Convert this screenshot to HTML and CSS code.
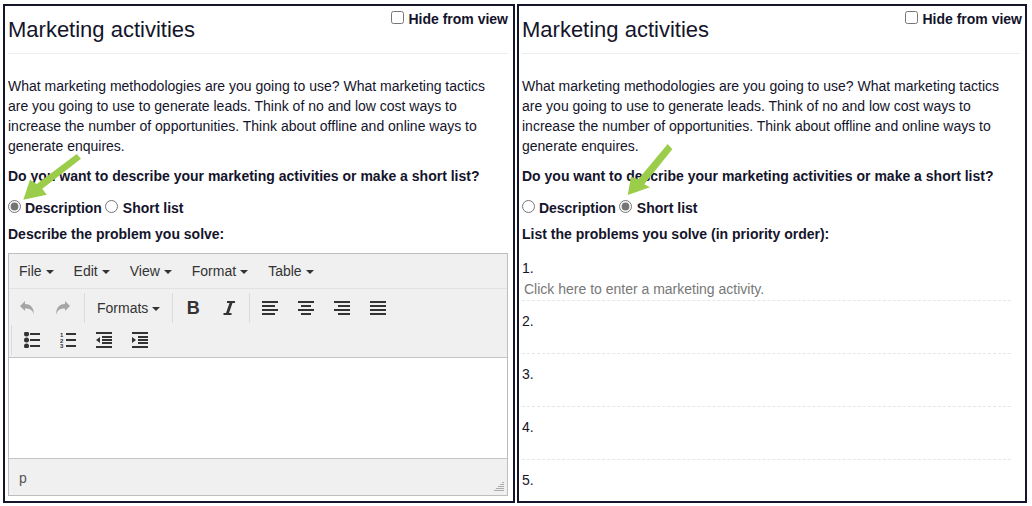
FILE: index.html
```html
<!DOCTYPE html>
<html lang="en">

<head>
    <meta charset="UTF-8">
    <title>Marketing activities</title>
    <link rel="stylesheet" href="styles.css">
</head>

<body>
    <div class="container">
        <div class="panel panel-left">
            <label class="hide-view"><input type="checkbox"> Hide from view</label>
            <h3 class="title">Marketing activities</h3>
            <p class="intro">What marketing methodologies are you going to use? What marketing tactics are you going to use to generate leads. Think of no and low cost ways to increase the number of opportunities. Think about offline and online ways to generate enquires.</p>
            <p class="question">Do you want to describe your marketing activities or make a short list?</p>
            <div class="choice">
                <label><input type="radio" name="mode1" checked> Description</label>
                <label><input type="radio" name="mode1"> Short list</label>
            </div>
            <p class="question sub">Describe the problem you solve:</p>
            <div class="editor">
                <div class="menubar">
                    <span class="menu">File<i class="caret"></i></span>
                    <span class="menu">Edit<i class="caret"></i></span>
                    <span class="menu">View<i class="caret"></i></span>
                    <span class="menu">Format<i class="caret"></i></span>
                    <span class="menu">Table<i class="caret"></i></span>
                </div>
                <div class="toolbar">
                    <div class="tool-row">
                        <div class="group">
                            <span class="tool"><svg viewBox="0 0 16 16"><path class="off" d="M1 6l5-5v3c5 0 9 3 9 11-1-5-4-6.500-9-6.500V11z"/></svg></span>
                            <span class="tool"><svg viewBox="0 0 16 16"><path class="off" d="M15 6l-5-5v3C5 4 1 7 1 15c1-5 4-6.500 9-6.500V11z"/></svg></span>
                        </div>
                        <div class="group">
                            <span class="formats">Formats<i class="caret"></i></span>
                        </div>
                        <div class="group">
                            <span class="tool"><b class="tool-b">B</b></span>
                            <span class="tool"><svg viewBox="0 0 16 16"><path d="M6 1h8v2h-2.500L8 13h2.500v2h-8v-2H5L8.500 3H6z"/></svg></span>
                        </div>
                        <div class="group">
                            <span class="tool"><svg viewBox="0 0 16 16"><path d="M0 1h16v2H0zM0 5h13v2H0zM0 9h16v2H0zM0 13h13v2H0z"/></svg></span>
                            <span class="tool"><svg viewBox="0 0 16 16"><path d="M0 1h16v2H0zM3 5h10v2H3zM0 9h16v2H0zM3 13h10v2H3z"/></svg></span>
                            <span class="tool"><svg viewBox="0 0 16 16"><path d="M0 1h16v2H0zM4 5h12v2H4zM0 9h16v2H0zM4 13h12v2H4z"/></svg></span>
                            <span class="tool"><svg viewBox="0 0 16 16"><path d="M0 1h16v2H0zM0 5h16v2H0zM0 9h16v2H0zM0 13h16v2H0z"/></svg></span>
                        </div>
                    </div>
                    <div class="tool-row">
                        <div class="group">
                            <span class="tool"><svg viewBox="0 0 16 16"><circle cx="2.500" cy="2" r="2.500"/><circle cx="2.500" cy="8" r="2.500"/><circle cx="2.500" cy="14" r="2.500"/><path d="M6 1h10v2H6zM6 7h10v2H6zM6 13h10v2H6z"/></svg></span>
                            <span class="tool"><svg viewBox="0 0 16 16"><text class="num-glyph" x="0" y="5">1</text><text class="num-glyph" x="0" y="10.500">2</text><text class="num-glyph" x="0" y="16">3</text><path d="M6 1h10v2H6zM6 7h10v2H6zM6 13h10v2H6z"/></svg></span>
                            <span class="tool"><svg viewBox="0 0 16 16"><path d="M0 0h16v2H0zM6 4h10v2H6zM6 7h10v2H6zM6 10h10v2H6zM0 14h16v2H0zM4 5v6L0 8z"/></svg></span>
                            <span class="tool"><svg viewBox="0 0 16 16"><path d="M0 0h16v2H0zM6 4h10v2H6zM6 7h10v2H6zM6 10h10v2H6zM0 14h16v2H0zM0 5v6l4-3z"/></svg></span>
                        </div>
                    </div>
                </div>
                <div class="edit-area"></div>
                <div class="statusbar">
                    <span>p</span>
                    <svg class="grip" viewBox="0 0 10 10"><path d="M8 0h2v1H8zM6 2h4v1H6zM4 4h6v1H4zM2 6h8v1H2zM0 8h10v1H0z"/></svg>
                </div>
            </div>
            <svg class="arrow arrow-left" viewBox="0 0 65 52"><path d="M56.700 3L61 7.700 22.300 37.700l4.400 6-23.400 5L10 28.700l6.700 4.300z"/></svg>
        </div>

        <div class="panel panel-right">
            <label class="hide-view"><input type="checkbox"> Hide from view</label>
            <h3 class="title">Marketing activities</h3>
            <p class="intro">What marketing methodologies are you going to use? What marketing tactics are you going to use to generate leads. Think of no and low cost ways to increase the number of opportunities. Think about offline and online ways to generate enquires.</p>
            <p class="question">Do you want to describe your marketing activities or make a short list?</p>
            <div class="choice">
                <label><input type="radio" name="mode2"> Description</label>
                <label><input type="radio" name="mode2" checked> Short list</label>
            </div>
            <p class="question sub">List the problems you solve (in priority order):</p>
            <ol class="short-list">
                <li><span class="num">1.</span><div class="field placeholder">Click here to enter a marketing activity.</div></li>
                <li><span class="num">2.</span><div class="field"></div></li>
                <li><span class="num">3.</span><div class="field"></div></li>
                <li><span class="num">4.</span><div class="field"></div></li>
                <li><span class="num">5.</span><div class="field"></div></li>
            </ol>
            <svg class="arrow arrow-right" viewBox="0 0 60 60"><path d="M47.700 4l4.600 5.300-28 35 5.700 3L7.700 55 11 36.700l7.300 2.600z"/></svg>
        </div>
    </div>
</body>

</html>
```

FILE: styles.css
```css
* {
    box-sizing: border-box;
}

body {
    margin: 0;
    background: #fff;
    color: #14142b;
    font-family: "Liberation Sans", Arial, sans-serif;
    font-size: 14px;
    line-height: 20px;
}

.container {
    display: flex;
    gap: 2px;
    padding: 4px 3px;
    height: 506px;
    overflow: hidden;
}

.panel {
    position: relative;
    height: 499px;
    border: 2px solid #14142b;
    padding: 0 5px 0 3px;
    overflow: hidden;
}

.panel-left {
    width: 512px;
}

.panel-right {
    width: 510px;
}

.hide-view {
    position: absolute;
    top: 3px;
    right: 5px;
    font-weight: 700;
}

.panel-right .hide-view {
    right: 3px;
}

.hide-view input {
    margin: 0 1px 0 0;
    vertical-align: 0;
}

.title {
    margin: 0;
    padding-top: 9px;
    height: 48px;
    border-bottom: 1px solid #eee;
    font-size: 22px;
    line-height: 30px;
    font-weight: 400;
}

.intro {
    margin: 22px 0 0;
}

.question {
    margin: 10px 0 0;
    font-weight: 700;
}

.question.sub {
    margin-top: 6px;
}

.choice {
    margin-top: 12px;
    display: flex;
    gap: 3px;
    font-weight: 700;
}

.choice input {
    margin: 0;
    vertical-align: 0;
    accent-color: #757575;
}

.choice label + label input {
    margin-right: 1px;
}

.editor {
    margin-top: 9px;
    border: 1px solid #bdbdbd;
    width: 500px;
    height: 243px;
    background: #f0f0f0;
    color: #333;
    display: flex;
    flex-direction: column;
}

.menubar {
    height: 35px;
    border-bottom: 1px solid #e2e2e2;
    display: flex;
    align-items: center;
    gap: 20px;
    padding: 0 0 0 10px;
    color: #333;
}

.caret {
    display: inline-block;
    margin-left: 4px;
    vertical-align: 2px;
    border-top: 4px solid #333;
    border-left: 4px solid transparent;
    border-right: 4px solid transparent;
}

.toolbar {
    height: 68px;
    padding-top: 4px;
}

.tool-row {
    display: flex;
    height: 32px;
}

.group {
    display: flex;
    align-items: center;
    height: 30px;
    padding: 0 2px;
    border-right: 1px solid #dcdcdc;
}

.group:first-child {
    padding-left: 0;
    padding-right: 3px;
}

.group:last-child {
    border-right: none;
}

.tool-row + .tool-row {
    padding-left: 2px;
}

.tool-row + .tool-row .group {
    border-left: 1px solid #dcdcdc;
    border-right: none;
    padding-left: 2px;
}

.tool {
    width: 36px;
    height: 30px;
    display: flex;
    align-items: center;
    justify-content: center;
}

.tool svg {
    width: 16px;
    height: 16px;
    fill: #333;
}

.tool svg .off {
    fill: #a6a6a6;
}

.tool-b {
    font-size: 18px;
    color: #333;
}

.num-glyph {
    font-size: 6px;
    font-weight: 700;
}

.formats {
    padding: 0 10px 0 10px;
    white-space: nowrap;
}

.edit-area {
    height: 102px;
    background: #fff;
    border-top: 1px solid #c4c4c4;
    border-bottom: 1px solid #c4c4c4;
}

.statusbar {
    flex: 1;
    position: relative;
    padding: 9px 0 0 10px;
    color: #555;
}

.grip {
    position: absolute;
    right: 3px;
    bottom: 3px;
    width: 10px;
    height: 10px;
    fill: #aaa;
}

.short-list {
    list-style: none;
    margin: 14px 0 0;
    padding: 0;
}

.short-list li {
    height: 53px;
}

.num {
    display: block;
}

.field {
    height: 23px;
    padding: 1px 0 0 2px;
    margin-right: 9px;
    border-bottom: 1px dashed #e6e6e6;
}

.placeholder {
    color: #777;
}

.short-list li:last-child .field {
    border-bottom: none;
}

.arrow {
    position: absolute;
}

.arrow path {
    fill: #9ccd4a;
}

.arrow-left {
    left: 15px;
    top: 145px;
    width: 65px;
    height: 52px;
}

.arrow-right {
    left: 101px;
    top: 134px;
    width: 60px;
    height: 60px;
}
```
